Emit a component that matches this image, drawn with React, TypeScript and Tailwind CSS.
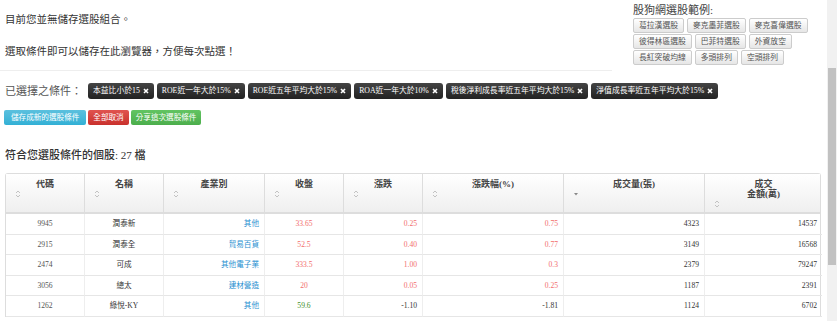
import React from "react";

const FONT = "font-['Liberation_Serif','Noto_Sans_CJK_TC',serif]";

const examples = [
  ["葛拉漢選股", "麥克墨菲選股", "麥克喜偉選股"],
  ["彼得林區選股", "巴菲特選股", "外資放空"],
  ["長紅突破均線", "多頭排列", "空頭排列"],
];

const tags = [
  "本益比小於15",
  "ROE近一年大於15%",
  "ROE近五年平均大於15%",
  "ROA近一年大於10%",
  "稅後淨利成長率近五年平均大於15%",
  "淨值成長率近五年平均大於15%",
];

type Row = {
  code: string;
  name: string;
  industry: string;
  close: string;
  change: string;
  pct: string;
  vol: string;
  amount: string;
  up: boolean;
};

const rows: Row[] = [
  { code: "9945", name: "潤泰新", industry: "其他", close: "33.65", change: "0.25", pct: "0.75", vol: "4323", amount: "14537", up: true },
  { code: "2915", name: "潤泰全", industry: "貿易百貨", close: "52.5", change: "0.40", pct: "0.77", vol: "3149", amount: "16568", up: true },
  { code: "2474", name: "可成", industry: "其他電子業", close: "333.5", change: "1.00", pct: "0.3", vol: "2379", amount: "79247", up: true },
  { code: "3056", name: "總太", industry: "建材營造", close: "20", change: "0.05", pct: "0.25", vol: "1187", amount: "2391", up: true },
  { code: "1262", name: "綠悅-KY", industry: "其他", close: "59.6", change: "-1.10", pct: "-1.81", vol: "1124", amount: "6702", up: false },
];

function SortIcon() {
  return (
    <svg width="6" height="8" viewBox="0 0 6 8" fill="none" aria-hidden="true">
      <path d="M1 3l2-2 2 2M1 5l2 2 2-2" stroke="#b5b5b5" strokeWidth="0.8" />
    </svg>
  );
}

function SortDown() {
  return (
    <svg width="6" height="8" viewBox="0 0 6 8" aria-hidden="true">
      <path d="M1 3h4L3 5.5z" fill="#888" />
    </svg>
  );
}

function Cross() {
  return (
    <svg width="6" height="6" viewBox="0 0 6 6" aria-hidden="true" className="ml-[3px]">
      <path d="M1 1l4 4M5 1L1 5" stroke="#fff" strokeWidth="1.6" />
    </svg>
  );
}

const headers: { label: string[]; sorted?: boolean }[] = [
  { label: ["代碼"] },
  { label: ["名稱"] },
  { label: ["產業別"] },
  { label: ["收盤"] },
  { label: ["漲跌"] },
  { label: ["漲跌幅(%)"] },
  { label: ["成交量(張)"], sorted: true },
  { label: ["成交", "金額(萬)"] },
];

const grid = "grid grid-cols-[78px_79px_101px_79px_79px_141px_141px_118px]";

export default function App() {
  return (
    <div className={`flex h-[321px] w-[837px] overflow-hidden bg-white text-[#333] ${FONT}`}>
      <div className="min-w-0 flex-1">
        {/* Top */}
        <div className="flex">
          <div className="h-[71px] w-[612px] border-b border-[#eee] pl-[5px] text-[10.5px] leading-[14px]">
            <p className="pt-[13px]">目前您並無儲存選股組合。</p>
            <p className="pt-[18px]">選取條件即可以儲存在此瀏覽器，方便每次點選！</p>
          </div>
          <div className="pl-[21px] pt-[3px]">
            <p className="text-[11px] leading-[14px] text-[#444]">股狗網選股範例:</p>
            <div className="mt-[1px] flex flex-col gap-[1px]">
              {examples.map((r, i) => (
                <div key={i} className="flex gap-[3px]">
                  {r.map((b) => (
                    <span
                      key={b}
                      className="flex h-[15px] items-center rounded-[2px] border border-[#ccc] bg-gradient-to-b from-white to-[#e6e6e6] px-[5px] text-[7.8px] text-[#555]"
                    >
                      {b}
                    </span>
                  ))}
                </div>
              ))}
            </div>
          </div>
        </div>

        {/* Selected conditions */}
        <div className="mt-[12px] flex items-center pl-[5px]">
          <span className="mr-[6px] text-[11px] leading-[16px] text-[#555]">已選擇之條件：</span>
          <div className="flex gap-[3px]">
            {tags.map((t) => (
              <span
                key={t}
                className="flex h-[16px] items-center rounded-[3px] bg-gradient-to-b from-[#444] to-[#222] px-[5px] text-[7.8px] text-white"
              >
                {t}
                <Cross />
              </span>
            ))}
          </div>
        </div>

        <div className="mt-[11px] flex gap-[2px] pl-[4px] text-[7.6px] text-white">
          <span className="flex h-[15px] items-center rounded-[2px] bg-gradient-to-b from-[#5bc0de] to-[#31b0d5] px-[7px]">儲存成新的選股條件</span>
          <span className="flex h-[15px] items-center rounded-[2px] bg-gradient-to-b from-[#e0534f] to-[#c9302c] px-[5px]">全部取消</span>
          <span className="flex h-[15px] items-center rounded-[2px] bg-gradient-to-b from-[#62c462] to-[#4cae4c] px-[5px]">分享這次選股條件</span>
        </div>

        <p className="mt-[23px] pl-[5px] text-[11px] font-medium leading-[14px] text-[#333]">符合您選股條件的個股: 27 檔</p>

        {/* Table */}
        <div className="ml-[5px] mt-[11px] w-[816px] border border-b-0 border-[#ddd] rounded-t-[3px]">
          <div className={`${grid} h-[40px] border-b-2 border-[#ddd] bg-gradient-to-b from-white to-[#efefef]`}>
            {headers.map((h, i) => (
              <div key={i} className={`pt-[5px] text-[9px] font-bold leading-[10px] text-[#444] ${i > 0 ? "border-l border-[#ddd]" : ""}`}>
                {h.label.map((l) => (
                  <p key={l} className="text-center">{l}</p>
                ))}
                <div className="flex h-[10px] items-center pl-[9px]">{h.sorted ? <SortDown /> : <SortIcon />}</div>
              </div>
            ))}
          </div>
          {rows.map((r) => {
            const col = r.up ? "text-[#f26d6d]" : "text-[#333]";
            const closeCol = r.up ? "text-[#f26d6d]" : "text-[#3f8f2a]";
            const cell = "flex h-[20.6px] items-center border-b border-[#e6e6e6] text-[7.6px]";
            return (
              <div key={r.code} className={grid}>
                <div className={`${cell} justify-center text-[#555]`}>{r.code}</div>
                <div className={`${cell} justify-center border-l border-l-[#eee] text-[#333]`}>{r.name}</div>
                <div className={`${cell} justify-end border-l border-l-[#eee] pr-[5px] text-[#1f8fd0]`}>{r.industry}</div>
                <div className={`${cell} justify-center border-l border-l-[#eee] ${closeCol}`}>{r.close}</div>
                <div className={`${cell} justify-end border-l border-l-[#eee] pr-[5px] ${col}`}>{r.change}</div>
                <div className={`${cell} justify-end border-l border-l-[#eee] pr-[5px] ${col}`}>{r.pct}</div>
                <div className={`${cell} justify-end border-l border-l-[#eee] pr-[5px] text-[#333]`}>{r.vol}</div>
                <div className={`${cell} justify-end border-l border-l-[#eee] pr-[5px] text-[#333]`}>{r.amount}</div>
              </div>
            );
          })}
        </div>
      </div>

      {/* Scrollbar */}
      <div className="w-[10px] shrink-0 bg-[#f1f1f1] px-[1px] pt-[68px]">
        <div className="h-[197px] bg-[#c1c1c1]" />
      </div>
    </div>
  );
}
